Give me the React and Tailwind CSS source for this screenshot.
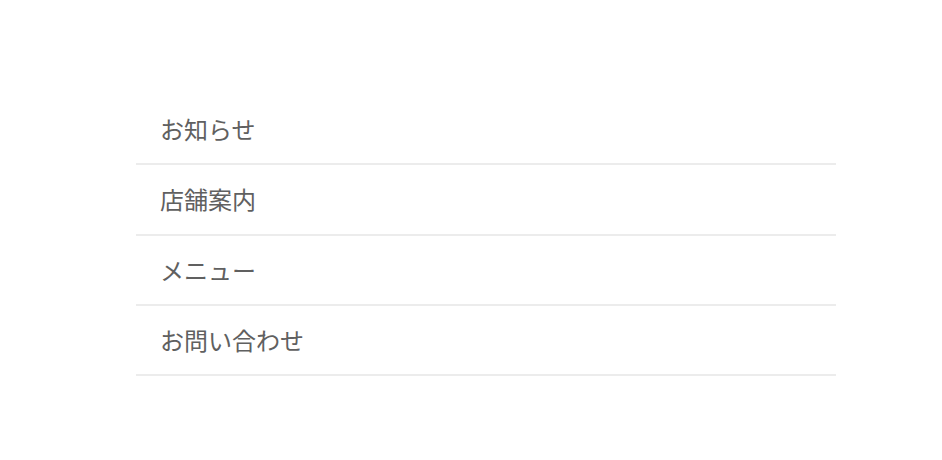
import React from 'react';

const items = ['お知らせ', '店舗案内', 'メニュー', 'お問い合わせ'];

export default function App() {
  return (
    <div className="min-h-[460px] bg-white pt-[95px] pl-[136px]">
      <ul className="w-[700px] font-['Noto_Sans_CJK_JP','Noto_Sans',sans-serif]">
        {items.map((label) => (
          <li
            key={label}
            className="border-b-2 border-[#ececec] pl-6 py-4 text-[24px] leading-[36.33px] text-[#606060]"
          >
            {label}
          </li>
        ))}
      </ul>
    </div>
  );
}
